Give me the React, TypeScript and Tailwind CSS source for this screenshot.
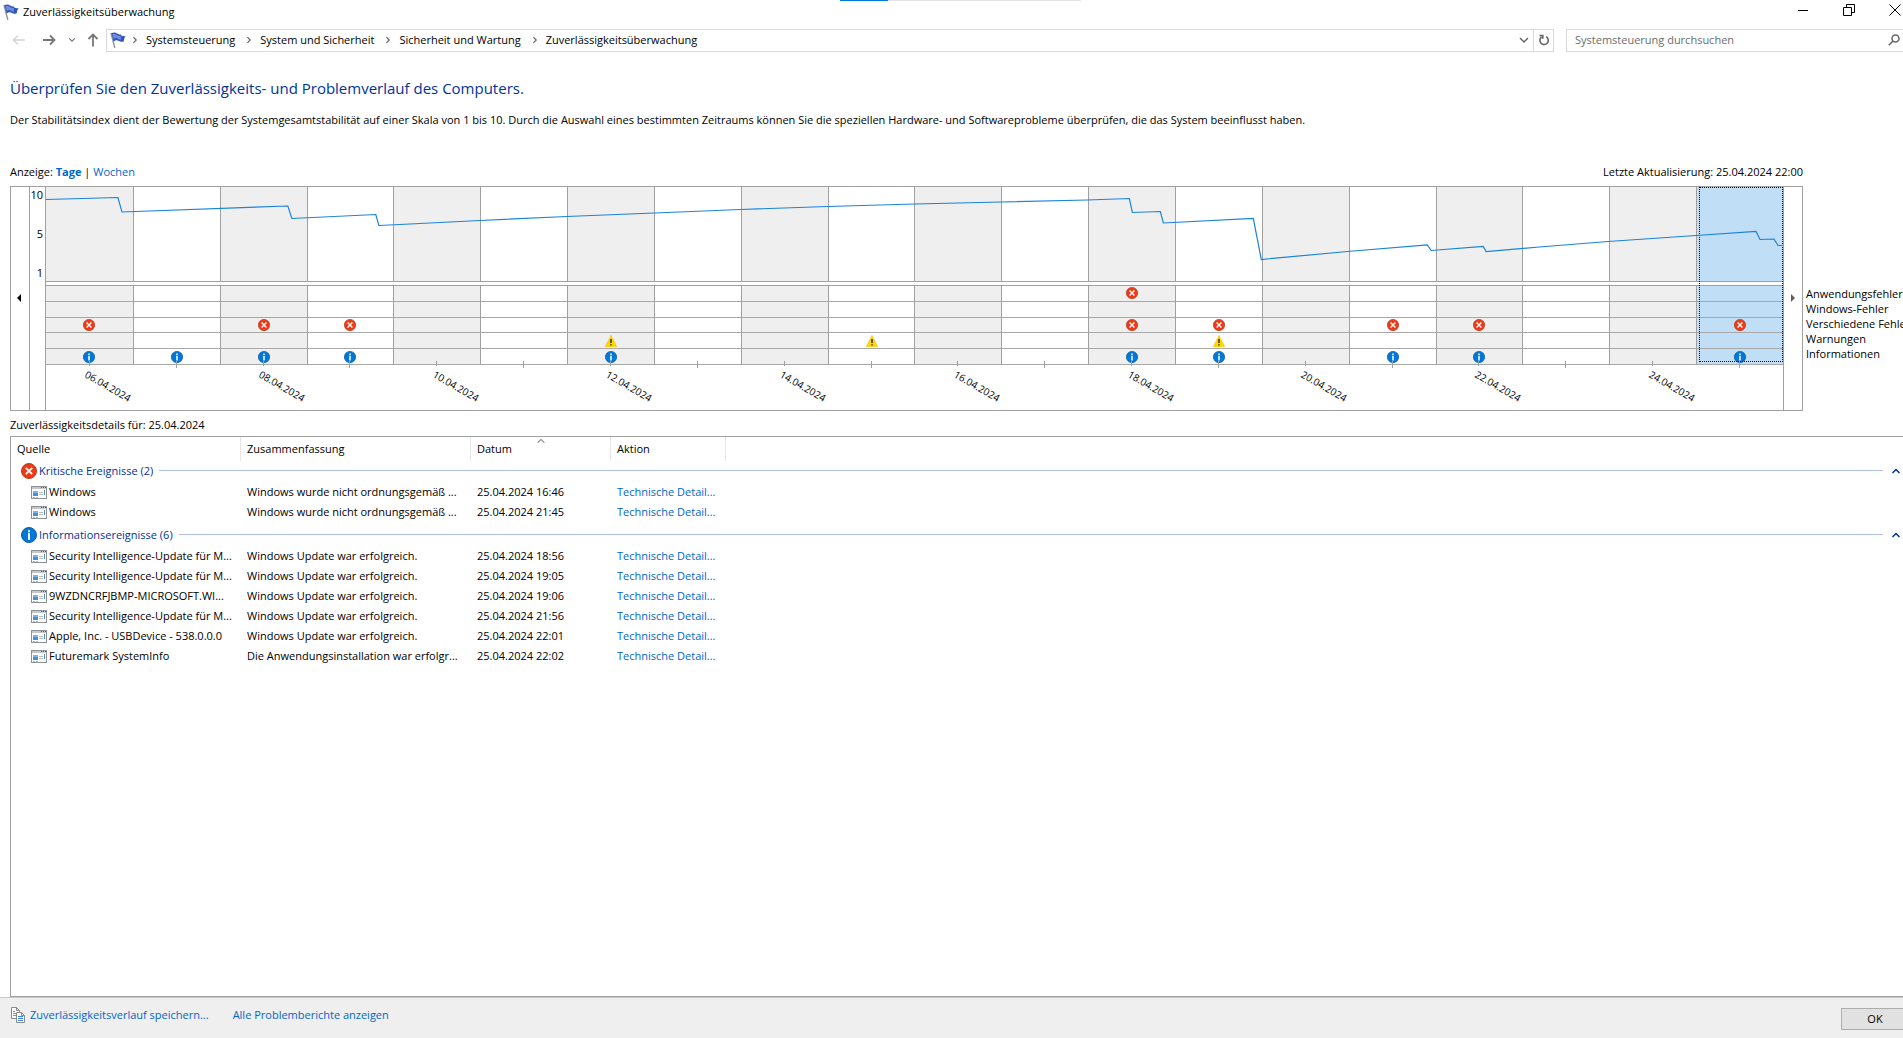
import { Fragment } from "react";
import clsx from "clsx";

type Level = "app" | "windows" | "misc" | "warning" | "info";

const LEVELS: Level[] = ["app", "windows", "misc", "warning", "info"];

const LEGEND = ["Anwendungsfehler", "Windows-Fehler", "Verschiedene Fehler", "Warnungen", "Informationen"];

const CRUMBS = ["Systemsteuerung", "System und Sicherheit", "Sicherheit und Wartung", "Zuverlässigkeitsüberwachung"];

const DAYS: { date: string; events: Level[] }[] = [
    { date: "06.04.2024", events: ["misc", "info"] },
    { date: "07.04.2024", events: ["info"] },
    { date: "08.04.2024", events: ["misc", "info"] },
    { date: "09.04.2024", events: ["misc", "info"] },
    { date: "10.04.2024", events: [] },
    { date: "11.04.2024", events: [] },
    { date: "12.04.2024", events: ["warning", "info"] },
    { date: "13.04.2024", events: [] },
    { date: "14.04.2024", events: [] },
    { date: "15.04.2024", events: ["warning"] },
    { date: "16.04.2024", events: [] },
    { date: "17.04.2024", events: [] },
    { date: "18.04.2024", events: ["app", "misc", "info"] },
    { date: "19.04.2024", events: ["misc", "warning", "info"] },
    { date: "20.04.2024", events: [] },
    { date: "21.04.2024", events: ["misc", "info"] },
    { date: "22.04.2024", events: ["misc", "info"] },
    { date: "23.04.2024", events: [] },
    { date: "24.04.2024", events: [] },
    { date: "25.04.2024", events: ["misc", "info"] },
];

const SELECTED = "25.04.2024";

// stability index over the 20 visible days
const STABILITY =
    "0,12.5 72,10.5 76,25 242,19 246,31.5 330,27.5 333,38.5 354,37.5 434,33.5 521,29.5 609,26 695,22.5 782,19.5 869,17 956,15 1042,13 1084,11.5 1087,25.5 1115,24.5 1118,36 1208,31.5 1216,72.5 1302,64.5 1382,58 1386,63.5 1438,59.5 1441,64.5 1494,60 1563,54.5 1651,48.5 1711,44.5 1715,52.5 1729,52 1733,58.5 1738,58.5";

const GROUPS = [
    {
        title: "Kritische Ereignisse (2)",
        level: "misc" as Level,
        rows: [
            ["Windows", "Windows wurde nicht ordnungsgemäß ...", "25.04.2024 16:46"],
            ["Windows", "Windows wurde nicht ordnungsgemäß ...", "25.04.2024 21:45"],
        ],
    },
    {
        title: "Informationsereignisse (6)",
        level: "info" as Level,
        rows: [
            ["Security Intelligence-Update für M...", "Windows Update war erfolgreich.", "25.04.2024 18:56"],
            ["Security Intelligence-Update für M...", "Windows Update war erfolgreich.", "25.04.2024 19:05"],
            ["9WZDNCRFJBMP-MICROSOFT.WI...", "Windows Update war erfolgreich.", "25.04.2024 19:06"],
            ["Security Intelligence-Update für M...", "Windows Update war erfolgreich.", "25.04.2024 21:56"],
            ["Apple, Inc. - USBDevice - 538.0.0.0", "Windows Update war erfolgreich.", "25.04.2024 22:01"],
            ["Futuremark SystemInfo", "Die Anwendungsinstallation war erfolgr...", "25.04.2024 22:02"],
        ],
    },
];

function FlagIcon() {
    return (
        <svg className="w-4 h-4 shrink-0" viewBox="0 0 16 16">
            <path d="M1 1 4.800 15.800" stroke="#8a8f98" strokeWidth="1.400" />
            <path d="M1.500 1.200C3.500 0 5.600.4 7.200 1.600c1.400 1 2.600.9 3.600.8l.8 1.400c1.400.4 2.600.5 4.200.2-1.200 1.400-1.800 3-2 5.200-2 .9-3.800.6-5.200-.4C7 7.800 5.400 8 3.700 9.400Z" fill="#3354b8" />
            <path d="M2.600 2.200C4.400 1.200 5.600 2 7 3s2.600 1.200 3.700.8L11 7.600C9 7.900 7.600 6.300 6.300 6 5.200 5.800 4.500 6.200 3.700 6.800Z" fill="#6c8ce2" />
        </svg>
    );
}

function LevelIcon({ level, className }: { level: Level; className: string }) {
    if (level === "warning") {
        return (
            <svg className={className} viewBox="0 0 12 12">
                <path d="M6 .3 11.800 11.700H.2Z" fill="#ffd800" stroke="#f2b90c" strokeWidth=".5" />
                <path d="M6 4v4M6 9.200v1.300" stroke="#222" strokeWidth="1.400" />
            </svg>
        );
    }
    if (level === "info") {
        return (
            <svg className={className} viewBox="0 0 16 16">
                <circle cx="8" cy="8" r="7.500" fill="#0078d7" stroke="#0a5ca8" />
                <path d="M8 3.200v2M8 6.300v6.500" stroke="#fff" strokeWidth="2" />
            </svg>
        );
    }
    return (
        <svg className={className} viewBox="0 0 16 16">
            <circle cx="8" cy="8" r="7.500" fill="#f03a17" stroke="#b83a22" />
            <path d="m4.800 4.800 6.400 6.400m0-6.400-6.400 6.400" stroke="#fff" strokeWidth="1.800" />
        </svg>
    );
}

function ProgramIcon() {
    return (
        <svg className="w-4 h-[13px] shrink-0" viewBox="0 0 16 13" shapeRendering="crispEdges">
            <path d="M.5.5h15v12H.5Z" fill="#fff" stroke="#8c9298" />
            <path d="M1 1h14v2H1Z" fill="#c3c8cd" />
            <path d="M10 1h1v1h-1ZM12 1h1v1h-1ZM14 1h1v1h-1Z" fill="#555c63" />
            <path d="M2 5h5v5H2Z" fill="#4b8fce" />
            <path d="M2 5h5v2H2Z" fill="#7fb2e0" />
            <path d="M8 6h4v1H8ZM8 8h4v1H8ZM2 11h2v1H2ZM5 11h2v1H5Z" fill="#b4bac0" />
            <path d="M13 4h1v5h-1Z" fill="#5b87b8" />
        </svg>
    );
}

function Chevron({ className, d }: { className: string; d: string }) {
    return (
        <svg className={className} viewBox="0 0 10 10" fill="none" stroke="currentColor" strokeWidth="1.500">
            <path d={d} />
        </svg>
    );
}

function TitleBar() {
    return (
        <header className="relative flex h-6 items-center pl-[3px]">
            <div className="absolute left-[840px] top-0 flex h-px w-[241px] bg-[#e5e5e5]">
                <div className="w-12 bg-[#0078d7]" />
            </div>
            <FlagIcon />
            <span className="ml-1">Zuverlässigkeitsüberwachung</span>
            <div className="mb-1 ml-auto mr-0.5 flex items-center gap-[34px]">
                <button aria-label="Minimieren">
                    <svg className="w-3 h-3" viewBox="0 0 12 12" stroke="#000"><path d="M1 6.500h10" /></svg>
                </button>
                <button aria-label="Verkleinern">
                    <svg className="w-3 h-3" viewBox="0 0 12 12" fill="none" stroke="#000">
                        <path d="M.5 3.500h8v8h-8ZM3.500 3V.5h8v8H9" />
                    </svg>
                </button>
                <button aria-label="Schließen">
                    <svg className="w-3 h-3" viewBox="0 0 12 12" stroke="#000"><path d="m.5.5 11 11m0-11-11 11" /></svg>
                </button>
            </div>
        </header>
    );
}

function AddressBar() {
    return (
        <div className="mt-1 flex h-6 items-center">
            <div className="flex w-[106px] shrink-0 items-center pl-3 text-[#777]">
                <button aria-label="Zurück" className="text-[#d4d4d4]">
                    <svg className="w-3.5 h-3.5" viewBox="0 0 14 14" fill="none" stroke="currentColor" strokeWidth="1.500"><path d="M13 7H1.500M6 2.500 1.500 7 6 11.500" /></svg>
                </button>
                <button aria-label="Vorwärts" className="ml-4">
                    <svg className="w-3.5 h-3.5" viewBox="0 0 14 14" fill="none" stroke="currentColor" strokeWidth="1.800"><path d="M1 7h11.500M8 2.500 12.500 7 8 11.500" /></svg>
                </button>
                <button aria-label="Zuletzt besucht" className="ml-3">
                    <Chevron className="w-2 h-2" d="m1.500 3 3.500 3.500L8.500 3" />
                </button>
                <button aria-label="Nach oben" className="ml-2.5">
                    <svg className="w-3.5 h-3.5" viewBox="0 0 14 14" fill="none" stroke="currentColor" strokeWidth="1.800"><path d="M7 13.500V1.500M2.500 6 7 1.500 11.500 6" /></svg>
                </button>
            </div>
            <nav className="flex h-[23px] flex-1 items-center border border-[#d9d9d9] pl-[3px]">
                <FlagIcon />
                {CRUMBS.map((crumb) => (
                    <Fragment key={crumb}>
                        <Chevron className="ml-[5px] mr-[7px] w-2 h-2 text-[#666]" d="m3 1.500 3.500 3.500L3 8.500" />
                        <a href="#" className="mr-[5px]">{crumb}</a>
                    </Fragment>
                ))}
                <button aria-label="Verlauf" className="ml-auto mr-1 text-[#666]">
                    <Chevron className="w-2.5 h-2.5" d="m1 3 4 4 4-4" />
                </button>
                <button aria-label="Aktualisieren" className="flex h-full w-5 items-center justify-center border-l border-[#d9d9d9]">
                    <svg className="w-3 h-3" viewBox="0 0 12 12" fill="none" stroke="#666" strokeWidth="1.600">
                        <path d="M8.300 2.800A4.200 4.200 0 1 1 3.600 3M1.500 1.500h3.300v3.300" />
                    </svg>
                </button>
            </nav>
            <label className="-mr-0.5 ml-3 flex h-[23px] w-[339px] items-center border border-[#d9d9d9] pl-2 pr-1">
                <input aria-label="Suchen" placeholder="Systemsteuerung durchsuchen" className="min-w-0 flex-1 outline-none placeholder:text-[#6d6d6d]" />
                <svg className="w-3 h-3" viewBox="0 0 12 12" fill="none" stroke="#666" strokeWidth="1.500">
                    <circle cx="7.500" cy="4.500" r="3.500" />
                    <path d="M5 7 .8 11.200" />
                </svg>
            </label>
        </div>
    );
}

function DayColumn({ day, index }: { day: (typeof DAYS)[number]; index: number }) {
    const selected = day.date === SELECTED;
    const fill = selected ? "bg-[#c0def6]" : index % 2 === 0 ? "bg-[#efefef]" : "bg-white";
    const divider = index > 0 && "border-l";
    return (
        <div className="relative flex flex-1 flex-col">
            <div className={clsx("h-[95px] border-b border-[#a0a0a0]", divider, fill)} />
            <div className={clsx("mt-[3px] grid h-20 grid-rows-5 border-t border-[#a0a0a0]", divider, fill)}>
                {LEVELS.map((level) => (
                    <div key={level} className="flex items-center justify-center border-b border-[#a8a8a8]">
                        {day.events.includes(level) && <LevelIcon level={level} className="w-3 h-3" />}
                    </div>
                ))}
            </div>
            <div className={clsx("mx-auto -mt-1 w-px bg-[#a0a0a0]", index % 2 === 0 ? "h-[5px]" : "h-[7px]")} />
            {index % 2 === 0 && (
                <span className="absolute left-1/2 top-[181px] origin-top-left rotate-[30deg] text-[10px] leading-3">{day.date}</span>
            )}
            {selected && <div className="absolute left-[3px] right-0 top-0 h-[175px] border border-dotted border-black" />}
        </div>
    );
}

function StabilityChart() {
    return (
        <div className="flex">
            <div className="flex h-[225px] min-w-0 flex-1 border border-[#a0a0a0]">
                <button aria-label="Frühere Tage" className="flex w-[18px] items-center justify-center pb-0.5 pr-0.5">
                    <svg className="w-1 h-2" viewBox="0 0 4 8"><path d="M4 0v8L0 4Z" /></svg>
                </button>
                <div className="flex h-full w-[17px] flex-col items-end gap-[23px] border-x border-[#a0a0a0] pr-0.5 leading-4">
                    <span>10</span>
                    <span>5</span>
                    <span>1</span>
                </div>
                <div className="relative flex min-w-0 flex-1">
                    {DAYS.map((day, i) => (
                        <DayColumn key={day.date} day={day} index={i} />
                    ))}
                    <svg className="absolute left-0 top-0 h-[94px] w-full" viewBox="0 0 1738 94" preserveAspectRatio="none" fill="none">
                        <polyline points={STABILITY} stroke="#1a83da" strokeWidth="1.200" vectorEffect="non-scaling-stroke" />
                    </svg>
                </div>
                <button aria-label="Spätere Tage" className="flex w-[19px] items-center justify-center border-l border-[#a0a0a0] pb-0.5">
                    <svg className="w-1 h-2" viewBox="0 0 4 8"><path d="M0 0v8l4-4Z" fill="#606060" /></svg>
                </button>
            </div>
            <ul className="mt-[100px] w-[100px] shrink-0 whitespace-nowrap pl-[3px] leading-[15px]">
                {LEGEND.map((name) => (
                    <li key={name}>{name}</li>
                ))}
            </ul>
        </div>
    );
}

function DetailsTable() {
    return (
        <div className="ml-2.5 flex-1 overflow-hidden border border-r-0 border-[#a0a0a0]">
            <table className="w-full table-fixed border-separate border-spacing-0 text-left">
                <colgroup>
                    <col className="w-[230px]" />
                    <col className="w-[230px]" />
                    <col className="w-[140px]" />
                    <col className="w-[115px]" />
                    <col />
                </colgroup>
                <thead>
                    <tr className="h-6">
                        {["Quelle", "Zusammenfassung", "Datum", "Aktion"].map((name) => (
                            <th key={name} scope="col" className="relative border-r border-[#e5e5e5] pl-1.5 font-normal">
                                {name}
                                {name === "Datum" && (
                                    <svg className="absolute left-1/2 top-0.5 h-1 w-2 -translate-x-1/2" viewBox="0 0 8 4" fill="none" stroke="#555"><path d="M.5 3.800 4 .5l3.500 3.300" /></svg>
                                )}
                            </th>
                        ))}
                        <td />
                    </tr>
                </thead>
                {GROUPS.map((group, i) => (
                    <tbody key={group.title}>
                        <tr className={i === 0 ? "h-[21px]" : "h-6"}>
                            <th colSpan={5} scope="colgroup" className={clsx("font-normal text-[#003399]", i > 0 ? "pt-px" : "pb-0.5")}>
                                <div className="flex items-center pl-2.5 pr-0.5">
                                    <LevelIcon level={group.level} className="w-4 h-4" />
                                    <span className="ml-0.5">{group.title}</span>
                                    <div className="ml-1.5 mr-2 h-px flex-1 bg-[#adbfe6]" />
                                    <button aria-label="Gruppe reduzieren">
                                        <Chevron className="block w-2.5 h-2.5" d="m1.500 7 3.500-3.500L8.500 7" />
                                    </button>
                                </div>
                            </th>
                        </tr>
                        {group.rows.map(([source, summary, date]) => (
                            <tr key={date} className="h-5 whitespace-nowrap">
                                <td>
                                    <div className="flex items-center gap-0.5 pl-5">
                                        <ProgramIcon />
                                        {source}
                                    </div>
                                </td>
                                <td className="pl-1.5">{summary}</td>
                                <td className="pl-1.5">{date}</td>
                                <td className="pl-1.5"><a href="#" className="text-[#0066cc]">Technische Detail...</a></td>
                                <td />
                            </tr>
                        ))}
                    </tbody>
                ))}
            </table>
        </div>
    );
}

function Footer() {
    return (
        <footer className="flex h-[41px] items-start border-t border-[#c8c8c8] bg-[#efefef] pl-2.5 text-[#0066cc]">
            <svg className="mt-[9px] w-4 h-4" viewBox="0 0 16 16" fill="#fff" stroke="#8a8a8a">
                <path d="M1.500.5h5l3 3v8h-8Z" />
                <path d="M6.500.5v3h3" fill="none" />
                <path d="M3 4.500h2M3 6.500h3M3 8.500h3" stroke="#5b9be0" />
                <path d="M6.500 5.500h5l3 3v7h-8Z" />
                <path d="M11.500 5.500v3h3" fill="none" />
                <path d="M8 9.500h5M8 11.500h5M8 13.500h5" stroke="#3b86dc" />
            </svg>
            <a href="#" className="ml-1 mt-[9px] leading-4">Zuverlässigkeitsverlauf speichern...</a>
            <a href="#" className="ml-6 mt-[9px] leading-4">Alle Problemberichte anzeigen</a>
            <button className="-mr-1.5 ml-auto mt-2.5 h-[22px] w-[68px] border border-[#adadad] bg-[#e1e1e1] text-black">OK</button>
        </footer>
    );
}

export default function App() {
    return (
        <div className="flex min-h-screen flex-col overflow-hidden bg-white font-['Open_Sans',sans-serif] text-[11px] leading-4 text-black">
            <TitleBar />
            <AddressBar />
            <main className="flex flex-1 flex-col">
                <section className="pl-2.5">
                    <h1 className="mt-6 text-[15px] leading-6 text-[#003399]">Überprüfen Sie den Zuverlässigkeits- und Problemverlauf des Computers.</h1>
                    <p className="mt-3 whitespace-nowrap">
                        Der Stabilitätsindex dient der Bewertung der Systemgesamtstabilität auf einer Skala von 1 bis 10. Durch die Auswahl eines bestimmten Zeitraums können Sie die speziellen Hardware- und Softwareprobleme überprüfen, die das System beeinflusst haben.
                    </p>
                    <div className="mb-1.5 mr-[100px] mt-9 flex justify-between">
                        <div>
                            Anzeige: <a href="#" className="font-bold text-[#0066cc]">Tage</a> | <a href="#" className="text-[#0066cc]">Wochen</a>
                        </div>
                        <span>Letzte Aktualisierung: 25.04.2024 22:00</span>
                    </div>
                    <StabilityChart />
                    <h2 className="mb-[3px] mt-1.5">Zuverlässigkeitsdetails für: {SELECTED}</h2>
                </section>
                <DetailsTable />
            </main>
            <Footer />
        </div>
    );
}
